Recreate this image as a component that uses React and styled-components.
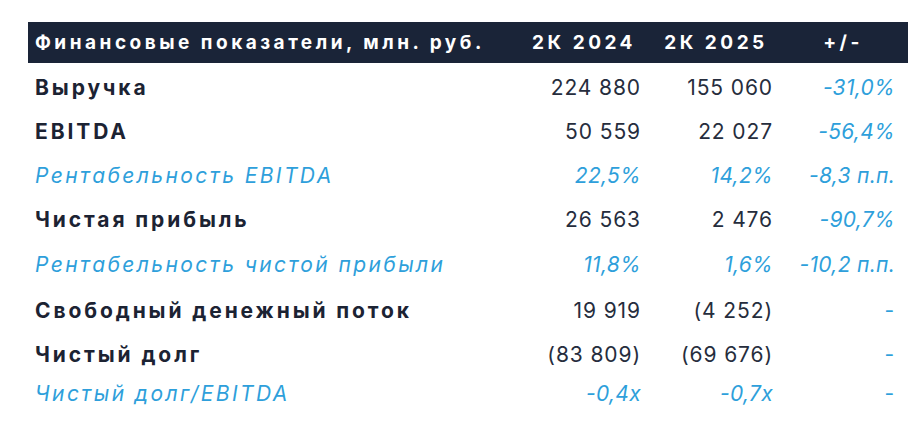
import React from "react";
import styled, { createGlobalStyle } from "styled-components";

const GlobalStyle = createGlobalStyle`
  body {
    margin: 0;
    background: #ffffff;
    font-family: Inter, "Noto Sans", sans-serif;
  }
`;

const Table = styled.div`
  width: 880px;
  margin: 22px 0 0 28px;
`;

const Row = styled.div`
  display: grid;
  grid-template-columns: 1fr 132px 132px 122px;
  align-items: center;
  padding: 0 13px 0 7px;
  height: ${props => props.height || 44}px;
  background: ${props => (props.head ? "#1a2438" : "transparent")};
`;

const Body = styled.div`
  padding-top: 2px;
`;

// Montserrat in the original is much wider than anything installed,
// so the letter-spacing stretches the lines to the same length
const HeadCell = styled.div`
  color: #ffffff;
  font-size: 19px;
  font-weight: 700;
  letter-spacing: 3.5px;
  text-align: ${props => (props.first ? "left" : "center")};
  padding-left: ${props => (props.first ? "0" : "18px")};
  white-space: nowrap;
`;

const Label = styled.div`
  font-size: 21px;
  white-space: nowrap;
  color: ${props => (props.italic ? "#2e9fdb" : "#1c2333")};
  font-weight: ${props => (props.italic ? 400 : 700)};
  font-style: ${props => (props.italic ? "italic" : "normal")};
  letter-spacing: ${props => (props.italic ? "2.4px" : "2.9px")};
`;

const Value = styled.div`
  font-size: 21px;
  text-align: right;
  white-space: nowrap;
  color: ${props => (props.blue ? "#2e9fdb" : "#262d3d")};
  font-style: ${props => (props.italic ? "italic" : "normal")};
  letter-spacing: ${props => (props.italic ? "0.3px" : "0.9px")};
`;

const rows = [
  { label: "Выручка", a: "224 880", b: "155 060", d: "-31,0%" },
  { label: "EBITDA", a: "50 559", b: "22 027", d: "-56,4%" },
  { label: "Рентабельность EBITDA", a: "22,5%", b: "14,2%", d: "-8,3 п.п.", sub: true },
  { label: "Чистая прибыль", a: "26 563", b: "2 476", d: "-90,7%" },
  { label: "Рентабельность чистой прибыли", a: "11,8%", b: "1,6%", d: "-10,2 п.п.", sub: true, h: 46 },
  { label: "Свободный денежный поток", a: "19 919", b: "(4 252)", d: "-", plain: true, h: 46 },
  { label: "Чистый долг", a: "(83 809)", b: "(69 676)", d: "-", plain: true, h: 42 },
  { label: "Чистый долг/EBITDA", a: "-0,4x", b: "-0,7x", d: "-", sub: true, plain: true, h: 36 },
];

export default function App() {
  return (
    <>
      <GlobalStyle />
      <Table>
        <Row head height={41}>
          <HeadCell first>Финансовые показатели, млн. руб.</HeadCell>
          <HeadCell>2К 2024</HeadCell>
          <HeadCell>2К 2025</HeadCell>
          <HeadCell>+/-</HeadCell>
        </Row>
        <Body>
          {rows.map(r => (
            <Row key={r.label} height={r.h}>
              <Label italic={r.sub}>{r.label}</Label>
              <Value blue={r.sub} italic={r.sub}>{r.a}</Value>
              <Value blue={r.sub} italic={r.sub}>{r.b}</Value>
              <Value blue italic={!r.plain}>{r.d}</Value>
            </Row>
          ))}
        </Body>
      </Table>
    </>
  );
}
